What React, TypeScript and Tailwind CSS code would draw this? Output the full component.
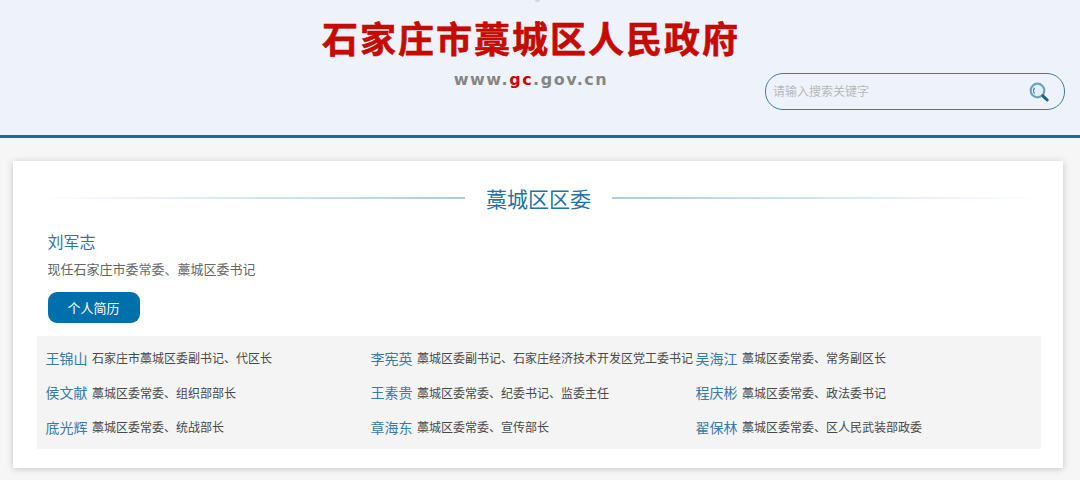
import React from 'react';

const members = [
  { name: '王锦山', post: '石家庄市藁城区委副书记、代区长' },
  { name: '李宪英', post: '藁城区委副书记、石家庄经济技术开发区党工委书记' },
  { name: '吴海江', post: '藁城区委常委、常务副区长' },
  { name: '侯文献', post: '藁城区委常委、组织部部长' },
  { name: '王素贵', post: '藁城区委常委、纪委书记、监委主任' },
  { name: '程庆彬', post: '藁城区委常委、政法委书记' },
  { name: '底光辉', post: '藁城区委常委、统战部长' },
  { name: '章海东', post: '藁城区委常委、宣传部长' },
  { name: '翟保林', post: '藁城区委常委、区人民武装部政委' },
];

const SearchIcon: React.FC = () => (
  <svg className="w-[22px] h-[22px]" viewBox="0 0 22 22" fill="none">
    <circle cx="9.5" cy="9.5" r="6.8" fill="#e3eef7" stroke="#6fa0c0" strokeWidth="2.2" />
    <path d="M6.4 7.2a4.2 4.2 0 0 0 0 5" stroke="#3f7da6" strokeWidth="1.1" strokeLinecap="round" />
    <path d="M14.8 14.8l4.4 4.2" stroke="#1f5f8f" strokeWidth="3" strokeLinecap="round" />
  </svg>
);

const App: React.FC = () => {
  return (
    <div className="relative w-[1080px] h-[480px] overflow-hidden bg-[#f6f6f6] font-['Noto_Sans_CJK_SC','Liberation_Sans',sans-serif]">
      <div className="absolute left-[535px] top-0 w-[5px] h-[2px] rounded-b-full bg-[#d4d6da]" />
      <header className="h-[138px] bg-[#eef3fb] border-b-[3px] border-[#1f6a9c] flex">
        <div className="w-[420px] ml-[321px] pt-[13px] flex flex-col items-center">
          <h1 className="h-[48px] text-[36px] leading-[48px] font-bold tracking-[2px] whitespace-nowrap text-[#c50a00] [-webkit-text-stroke:0.6px_#c50a00]">
            石家庄市藁城区人民政府
          </h1>
          <div className="mt-[8px] text-[16px] leading-[22px] font-bold tracking-[1.5px] text-[#858585] font-['DejaVu_Sans',sans-serif]">
            www.<span className="text-[#c50a00]">gc</span>.gov.cn
          </div>
        </div>
        <div className="ml-[24px] mt-[73px] w-[300px] h-[37px] rounded-[18px] border border-[#3b7aa5] pl-[7px] pr-[14px] flex items-center justify-between">
          <span className="text-[12px] leading-[16px] mb-[2px] text-[#b8b8b8]">请输入搜索关键字</span>
          <SearchIcon />
        </div>
      </header>

      <main className="mt-[23px] mx-[13px] w-[1050px] h-[307px] bg-white shadow-[0_1px_7px_rgba(0,0,0,0.2)] pl-[24px] pr-[22px]">
        <div className="pt-[21px] h-[52px] mr-[1px] flex items-center">
          <div className="flex-1 h-[2px] bg-gradient-to-r from-white to-[#a9cde2]" />
          <h2 className="w-[147px] text-center text-[21px] leading-[30px] text-[#1f72a8]">藁城区区委</h2>
          <div className="flex-1 h-[2px] bg-gradient-to-l from-white to-[#a9cde2]" />
        </div>

        <section className="pl-[10.5px] pt-[17px]">
          <div className="text-[16px] leading-[22px] text-[#2f76a6]">刘军志</div>
          <p className="mt-[7px] text-[13px] leading-[20px] text-[#666666]">现任石家庄市委常委、藁城区委书记</p>
          <button className="mt-[13px] block w-[92px] h-[31px] rounded-[9px] bg-[#0070ad] text-[13px] text-white">
            个人简历
          </button>
        </section>

        <div className="mt-[13px] h-[113px] bg-[#f4f4f4] pl-[8.5px] pt-[5px] grid grid-cols-[325px_325px_325px] auto-rows-[34.5px]">
          {members.map((m) => (
            <div key={m.name} className="flex items-center whitespace-nowrap">
              <span className="text-[14px] text-[#3a7aa8]">{m.name}</span>
              <span className="ml-[4.5px] text-[12px] text-[#484848]">{m.post}</span>
            </div>
          ))}
        </div>
      </main>
    </div>
  );
};

export default App;
